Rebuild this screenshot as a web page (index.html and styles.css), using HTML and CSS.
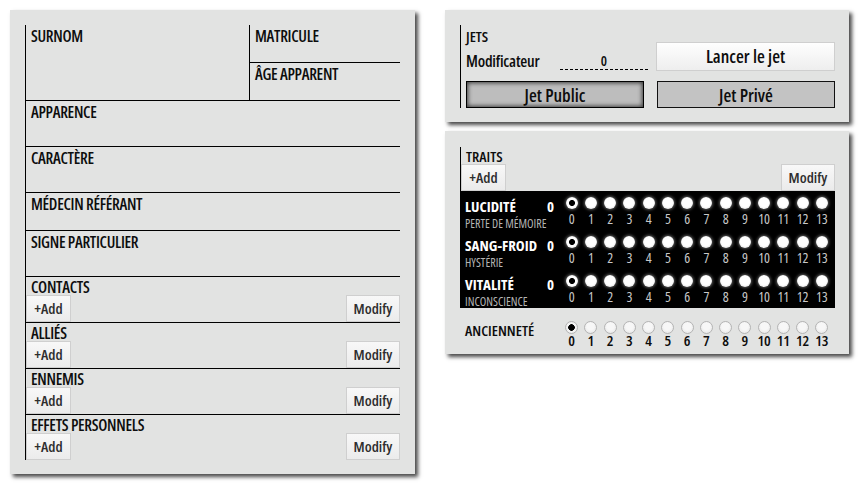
FILE: index.html
```html
<!DOCTYPE html>
<html lang="fr">
<head>
<meta charset="utf-8">
<title>Fiche</title>
<link rel="stylesheet" href="styles.css">
</head>
<body>
<div class="page">
  <section class="panel sheet">
    <div class="fields">
      <div class="top">
        <div class="cell"><div class="lbl">SURNOM</div></div>
        <div class="side">
          <div class="cell"><div class="lbl">MATRICULE</div></div>
          <div class="cell"><div class="lbl">ÂGE APPARENT</div></div>
        </div>
      </div>
      <div class="row h45"><div class="lbl">APPARENCE</div></div>
      <div class="row h45"><div class="lbl">CARACTÈRE</div></div>
      <div class="row h37"><div class="lbl">MÉDECIN RÉFÉRANT</div></div>
      <div class="row h45"><div class="lbl">SIGNE PARTICULIER</div></div>
      <div class="row list">
        <div class="lbl">CONTACTS</div>
        <div class="btns"><button class="btn add">+Add</button><button class="btn mod">Modify</button></div>
      </div>
      <div class="row list">
        <div class="lbl">ALLIÉS</div>
        <div class="btns"><button class="btn add">+Add</button><button class="btn mod">Modify</button></div>
      </div>
      <div class="row list">
        <div class="lbl">ENNEMIS</div>
        <div class="btns"><button class="btn add">+Add</button><button class="btn mod">Modify</button></div>
      </div>
      <div class="row list last">
        <div class="lbl">EFFETS PERSONNELS</div>
        <div class="btns"><button class="btn add">+Add</button><button class="btn mod">Modify</button></div>
      </div>
    </div>
  </section>

  <div class="col">
    <section class="panel jets">
      <div class="jets-inner">
        <div class="jets-top">
          <div class="jets-left">
            <div class="jets-title">JETS</div>
            <div class="modrow">
              <span class="modlbl">Modificateur</span>
              <span class="modinput">0</span>
            </div>
          </div>
          <button class="launch">Lancer le jet</button>
        </div>
        <div class="jets-bottom">
          <button class="jet public">Jet Public</button>
          <button class="jet private">Jet Privé</button>
        </div>
      </div>
    </section>

    <section class="panel traits">
      <div class="traits-head">
        <div class="traits-title">TRAITS</div>
        <div class="btns"><button class="btn add">+Add</button><button class="btn mod">Modify</button></div>
      </div>
      <div class="blackbox">
        <div class="trait">
          <div class="tname">
            <div class="tline"><span>LUCIDITÉ</span><span>0</span></div>
            <div class="tsub">PERTE DE MÉMOIRE</div>
          </div>
          <div class="scale">
            <div class="r"><i class="dot on"></i><b>0</b></div><div class="r"><i class="dot"></i><b>1</b></div><div class="r"><i class="dot"></i><b>2</b></div><div class="r"><i class="dot"></i><b>3</b></div><div class="r"><i class="dot"></i><b>4</b></div><div class="r"><i class="dot"></i><b>5</b></div><div class="r"><i class="dot"></i><b>6</b></div><div class="r"><i class="dot"></i><b>7</b></div><div class="r"><i class="dot"></i><b>8</b></div><div class="r"><i class="dot"></i><b>9</b></div><div class="r"><i class="dot"></i><b>10</b></div><div class="r"><i class="dot"></i><b>11</b></div><div class="r"><i class="dot"></i><b>12</b></div><div class="r"><i class="dot"></i><b>13</b></div>
          </div>
        </div>
        <div class="trait">
          <div class="tname">
            <div class="tline"><span>SANG-FROID</span><span>0</span></div>
            <div class="tsub">HYSTÉRIE</div>
          </div>
          <div class="scale">
            <div class="r"><i class="dot on"></i><b>0</b></div><div class="r"><i class="dot"></i><b>1</b></div><div class="r"><i class="dot"></i><b>2</b></div><div class="r"><i class="dot"></i><b>3</b></div><div class="r"><i class="dot"></i><b>4</b></div><div class="r"><i class="dot"></i><b>5</b></div><div class="r"><i class="dot"></i><b>6</b></div><div class="r"><i class="dot"></i><b>7</b></div><div class="r"><i class="dot"></i><b>8</b></div><div class="r"><i class="dot"></i><b>9</b></div><div class="r"><i class="dot"></i><b>10</b></div><div class="r"><i class="dot"></i><b>11</b></div><div class="r"><i class="dot"></i><b>12</b></div><div class="r"><i class="dot"></i><b>13</b></div>
          </div>
        </div>
        <div class="trait">
          <div class="tname">
            <div class="tline"><span>VITALITÉ</span><span>0</span></div>
            <div class="tsub">INCONSCIENCE</div>
          </div>
          <div class="scale">
            <div class="r"><i class="dot on"></i><b>0</b></div><div class="r"><i class="dot"></i><b>1</b></div><div class="r"><i class="dot"></i><b>2</b></div><div class="r"><i class="dot"></i><b>3</b></div><div class="r"><i class="dot"></i><b>4</b></div><div class="r"><i class="dot"></i><b>5</b></div><div class="r"><i class="dot"></i><b>6</b></div><div class="r"><i class="dot"></i><b>7</b></div><div class="r"><i class="dot"></i><b>8</b></div><div class="r"><i class="dot"></i><b>9</b></div><div class="r"><i class="dot"></i><b>10</b></div><div class="r"><i class="dot"></i><b>11</b></div><div class="r"><i class="dot"></i><b>12</b></div><div class="r"><i class="dot"></i><b>13</b></div>
          </div>
        </div>
      </div>
      <div class="seniority">
        <div class="slbl">ANCIENNETÉ</div>
        <div class="scale light">
          <div class="r"><i class="dot on"></i><b>0</b></div><div class="r"><i class="dot"></i><b>1</b></div><div class="r"><i class="dot"></i><b>2</b></div><div class="r"><i class="dot"></i><b>3</b></div><div class="r"><i class="dot"></i><b>4</b></div><div class="r"><i class="dot"></i><b>5</b></div><div class="r"><i class="dot"></i><b>6</b></div><div class="r"><i class="dot"></i><b>7</b></div><div class="r"><i class="dot"></i><b>8</b></div><div class="r"><i class="dot"></i><b>9</b></div><div class="r"><i class="dot"></i><b>10</b></div><div class="r"><i class="dot"></i><b>11</b></div><div class="r"><i class="dot"></i><b>12</b></div><div class="r"><i class="dot"></i><b>13</b></div>
        </div>
      </div>
    </section>
  </div>
</div>
</body>
</html>
```
FILE: styles.css
```css
* { box-sizing: border-box; }
html, body { margin: 0; padding: 0; background: #fff; }
body {
  font-family: "Open Sans", "DejaVu Sans Condensed", sans-serif;
  font-stretch: 75%;
  font-weight: 600;
  color: #0d0d0d;
}
button {
  font: inherit;
  font-stretch: 75%;
  margin: 0;
  cursor: pointer;
}

.page {
  display: flex;
  align-items: flex-start;
  gap: 30px;
  padding: 10px;
}

.panel {
  background: #e2e3e2;
  box-shadow: 3px 3px 4px rgba(0, 0, 0, 0.72);
}

/* ---------- left sheet ---------- */
.sheet {
  width: 405px;
  padding: 15px 15px 14px 15px;
}
.fields { border-left: 1px solid #000; }
.lbl {
  font-size: 16px;
  line-height: 20px;
  letter-spacing: -0.3px;
  padding: 1px 0 0 5px;
  white-space: nowrap;
}
.top {
  display: grid;
  grid-template-columns: 223px 1fr;
  height: 76px;
  border-bottom: 1px solid #000;
}
.side {
  border-left: 1px solid #000;
  display: grid;
  grid-template-rows: 38px 37px;
}
.side .cell:first-child { border-bottom: 1px solid #000; }

.row { border-bottom: 1px solid #000; }
.row.h45 { height: 46px; }
.row.h37 { height: 38px; }
.row.list { height: 46px; }
.row.last { border-bottom: 0; height: 45px; }
.row.list .lbl {
  line-height: 15px;
  padding-top: 3px;
  height: 18px;
}
.btns {
  display: flex;
  justify-content: space-between;
  height: 27px;
}
.btn {
  height: 27px;
  border: 1px solid #cfcfcf;
  background: linear-gradient(#f8f8f8, #ebebeb);
  color: #2e2e2e;
  font-size: 15px;
  line-height: 23px;
  padding: 0;
}
.btn.add { width: 45px; }
.btn.mod { width: 54px; }

/* ---------- right column ---------- */
.col {
  width: 404px;
  display: flex;
  flex-direction: column;
  gap: 9px;
}
.jets { padding: 15px 14px 14px 15px; }
.jets-inner {
  border-left: 1px solid #000;
  padding-left: 5px;
}
.jets-top {
  display: grid;
  grid-template-columns: 182px 1fr;
  column-gap: 8px;
  align-items: end;
}
.jets-title {
  font-size: 15px;
  line-height: 20px;
  padding-top: 1px;
  height: 21px;
}
.modrow {
  display: flex;
  align-items: flex-end;
  justify-content: space-between;
  height: 25px;
}
.modlbl {
  font-size: 16px;
  line-height: 20px;
  letter-spacing: -0.2px;
}
.modinput {
  width: 88px;
  text-align: center;
  font-size: 14px;
  line-height: 17px;
  border-bottom: 1px dashed #000;
  margin-bottom: 1px;
}
.launch {
  height: 29px;
  width: 179px;
  border: 1px solid #cfcfcf;
  background: linear-gradient(#fefefe, #eeeeee);
  font-size: 18px;
  line-height: 25px;
  color: #0d0d0d;
  padding: 0;
}
.jets-bottom {
  display: grid;
  grid-template-columns: 178px 178px;
  justify-content: space-between;
  margin-top: 10px;
}
.jet {
  height: 27px;
  font-size: 18px;
  line-height: 24px;
  color: #0d0d0d;
  padding: 0;
}
.jet.public {
  border: 1px solid #000;
  background: #bdbdbd;
  box-shadow: inset 0 0 4px 1px #3a3a3a;
}
.jet.private {
  border: 1px solid #111;
  background: #c3c3c3;
}

/* traits */
.traits { padding: 16px 14px 7px 15px; }
.traits-head { border-left: 1px solid #000; }
.traits-title {
  font-size: 15px;
  line-height: 15px;
  padding: 2px 0 0 5px;
  height: 17px;
}
.blackbox { background: #000; }
.trait {
  display: grid;
  grid-template-columns: 102px 1fr;
  height: 39px;
}
.tname { padding: 8px 8px 0 5px; color: #fff; }
.tline {
  display: flex;
  justify-content: space-between;
  font-size: 15px;
  line-height: 15px;
  font-weight: 700;
}
.tsub {
  margin-top: 3px;
  font-size: 12px;
  line-height: 13px;
  color: #b4b4b4;
  font-weight: 500;
  white-space: nowrap;
}
.scale {
  display: grid;
  grid-template-columns: repeat(14, 19.25px);
}
.r {
  display: flex;
  flex-direction: column;
  align-items: center;
  padding-top: 6px;
}
.r b {
  font-weight: 500;
  font-size: 14px;
  line-height: 18px;
  margin-top: 1px;
  color: #c8c8c8;
}
.dot {
  display: block;
  width: 12px;
  height: 12px;
  border-radius: 50%;
  background: radial-gradient(circle at 50% 45%, #ffffff 50%, #d6d6d6 100%);
  box-shadow: 0 0 3px 1px rgba(255, 255, 255, 0.35);
}
.dot.on {
  background: radial-gradient(circle at 50% 50%, #000 0 2.6px, #fff 3.4px 55%, #d6d6d6 100%);
}

.seniority {
  display: grid;
  grid-template-columns: 102px 1fr;
  height: 39px;
}
.slbl {
  font-size: 15px;
  line-height: 18px;
  padding: 13px 0 0 5px;
}
.scale.light .r { padding-top: 13px; }
.scale.light .dot {
  width: 13px;
  height: 13px;
  background: radial-gradient(circle at 50% 40%, #f7f7f7 40%, #e2e2e2 100%);
  border: 1px solid #b4b4b4;
  box-shadow: none;
}
.scale.light .dot.on {
  background: radial-gradient(circle at 50% 50%, #000 0 3px, #f4f4f4 3.6px 55%, #e2e2e2 100%);
}
.scale.light b {
  color: #0d0d0d;
  font-weight: 600;
  font-size: 15px;
  line-height: 13px;
  margin-top: 0;
}
```
